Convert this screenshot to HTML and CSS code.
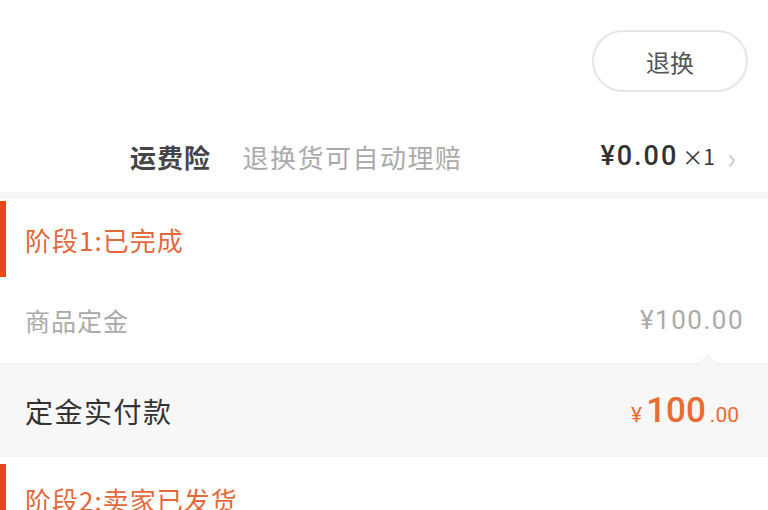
FILE: index.html
```html
<!DOCTYPE html>
<html lang="zh-CN">
<head>
<meta charset="UTF-8">
<meta name="viewport" content="width=device-width, initial-scale=1.0">
<title>订单详情</title>
<link rel="stylesheet" href="styles.css">
</head>
<body>
<div class="top">
  <button class="btn-return">退换</button>
</div>

<div class="insure">
  <div class="insure-left">
    <span class="insure-name">运费险</span>
    <span class="insure-desc">退换货可自动理赔</span>
  </div>
  <div class="insure-right">
    <span class="insure-price">¥0.00</span>
    <span class="insure-count">×1</span>
    <span class="arrow">›</span>
  </div>
</div>

<div class="split"></div>

<div class="stage">阶段1:已完成</div>

<div class="line">
  <span>商品定金</span>
  <span class="line-price">¥100.00</span>
</div>

<div class="paid">
  <span class="paid-label">定金实付款</span>
  <span class="paid-price"><small>¥</small>100<small>.00</small></span>
</div>

<div class="stage stage-next">阶段2:卖家已发货</div>
</body>
</html>
```

FILE: styles.css
```css
body {
  margin: 0;
  padding: 0;
  background-color: #fff;
  font-family: "Noto Sans CJK SC", "Noto Sans", sans-serif;
  color: #333;
}
.top {
  height: 120px;
  display: flex;
  justify-content: flex-end;
  align-items: flex-start;
  padding-right: 20px;
  box-sizing: border-box;
  padding-top: 30px;
}
.btn-return {
  width: 156px;
  height: 62px;
  border: 2px solid #e6e6e6;
  border-radius: 31px;
  background: #fff;
  color: #555;
  font-family: inherit;
  font-size: 24px;
}
.insure {
  height: 72px;
  display: flex;
  justify-content: space-between;
  align-items: center;
  padding: 0 32px 0 130px;
}
.insure-name {
  font-size: 26px;
  font-weight: bold;
  color: #454545;
  letter-spacing: 1px;
  margin-right: 28px;
}
.insure-desc {
  font-size: 26px;
  color: #aaa;
  letter-spacing: 1.5px;
}
.insure-right {
  display: flex;
  align-items: center;
}
.insure-price {
  font-family: "Roboto", sans-serif;
  font-size: 27px;
  font-weight: 500;
  letter-spacing: 2px;
  color: #333;
}
.insure-count {
  font-size: 21px;
  color: #333;
  margin-left: 4px;
}
.arrow {
  font-size: 30px;
  color: #ccc;
  margin-left: 12px;
  line-height: 1;
}
.split {
  height: 7px;
  background-color: #f5f5f5;
}
.stage {
  height: 76px;
  display: flex;
  align-items: center;
  padding-left: 19px;
  font-size: 26px;
  letter-spacing: 1px;
  color: #e2693c;
  border-left: 6px solid #e8461d;
  box-sizing: border-box;
  margin-top: 2px;
}
.stage-next {
  margin-top: 7px;
  align-items: flex-start;
  padding-top: 17px;
}
.line {
  height: 86px;
  display: flex;
  justify-content: space-between;
  align-items: center;
  padding: 0 25px;
  font-size: 25px;
  letter-spacing: 1px;
  color: #aaa;
}
.line-price {
  font-family: "Roboto", sans-serif;
  font-size: 26px;
  letter-spacing: 1.5px;
  margin-right: -1px;
}
.paid {
  position: relative;
  height: 93px;
  display: flex;
  justify-content: space-between;
  align-items: center;
  padding: 0 25px;
  background-color: #f7f7f7;
  border-top: 1px solid #f0f0f0;
}
.paid::before {
  content: "";
  position: absolute;
  right: 52px;
  top: -12px;
  width: 16px;
  height: 16px;
  background-color: #f7f7f7;
  border-left: 1px solid #eee;
  border-top: 1px solid #eee;
  transform: rotate(45deg) translate(4px, 4px);
}
.paid-label {
  font-size: 28px;
  letter-spacing: 1.5px;
  color: #333;
}
.paid-price {
  font-family: "Roboto", sans-serif;
  font-size: 35px;
  font-weight: 500;
  color: #ea6b33;
}
.paid-price small {
  font-size: 21px;
  font-weight: 400;
  margin: 0 4px;
}
```
